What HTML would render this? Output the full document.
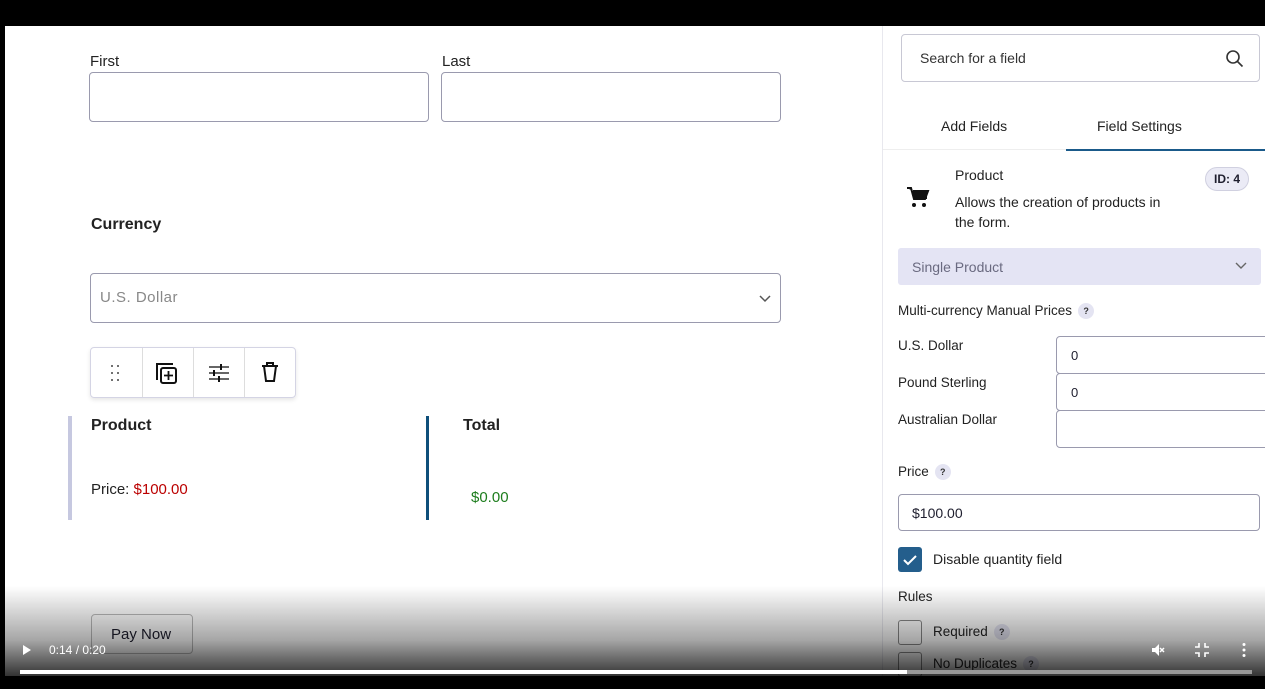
<!DOCTYPE html>
<html><head><style>
*{box-sizing:border-box;margin:0;padding:0}
body{width:1265px;height:689px;overflow:hidden;background:#000;font-family:"Liberation Sans",sans-serif;color:#1e1e2e;position:relative}
.pg{position:absolute;left:5px;top:26px;width:1260px;height:650px;background:#fff;overflow:hidden}
.a{position:absolute}
.inp{position:absolute;border:1px solid #9a9aae;border-radius:4px;background:#fff}
.lbl{position:absolute;font-size:14px;color:#222}
.q{display:inline-block;width:16px;height:16px;border-radius:8px;background:#e4e4f2;font-size:9px;text-align:center;line-height:16px;font-weight:bold;color:#333;vertical-align:middle;margin-left:6px}
</style></head><body>
<div class="pg">
<div class="lbl" style="left:85px;top:27px;font-size:15px">First</div>
<div class="lbl" style="left:437px;top:27px;font-size:15px">Last</div>
<div class="inp" style="left:84px;top:46px;width:340px;height:50px"></div>
<div class="inp" style="left:436px;top:46px;width:340px;height:50px"></div>
<div class="lbl" style="left:86px;top:190px;font-size:16px;font-weight:bold">Currency</div>
<div class="inp" style="left:85px;top:247px;width:691px;height:50px;font-size:15px;color:#888;padding:15px 9px;letter-spacing:.5px">U.S. Dollar
<svg class="a" style="right:8px;top:19px" width="14" height="10"><path d="M2 3l5 5 5-5" stroke="#555" stroke-width="1.5" fill="none"/></svg></div>
<div class="a" style="left:85px;top:321px;width:206px;height:51px;border:1px solid #d4d4e4;border-radius:4px;box-shadow:0 2px 4px rgba(0,0,0,.1);display:flex">
<div style="width:52px;border-right:1px solid #ddd;position:relative"><svg class="a" style="left:19px;top:16px" width="10" height="20"><g fill="#444"><circle cx="2" cy="2" r="1"/><circle cx="8" cy="2" r="1"/><circle cx="2" cy="9" r="1"/><circle cx="8" cy="9" r="1"/><circle cx="2" cy="16" r="1"/><circle cx="8" cy="16" r="1"/></g></svg></div>
<div style="width:51px;border-right:1px solid #ddd;position:relative"><svg class="a" style="left:12px;top:12px" width="26" height="26"><path d="M2 20V4h16" stroke="#111" stroke-width="2" fill="none"/><rect x="6" y="8" width="15" height="15" rx="2" stroke="#111" stroke-width="2" fill="none"/><path d="M13.5 11v9M9 15.5h9" stroke="#111" stroke-width="1.8"/></svg></div>
<div style="width:51px;border-right:1px solid #ddd;position:relative"><svg class="a" style="left:14px;top:15px" width="22" height="20"><path d="M1 4h20M1 10h20M1 16h20" stroke="#333" stroke-width="1.5"/><path d="M13 1v6M6 7v6M11 13v6" stroke="#111" stroke-width="2"/></svg></div>
<div style="flex:1;position:relative"><svg class="a" style="left:15px;top:13px" width="20" height="22"><path d="M2 5h16M7 5V2h6v3M4 5l2 15h8l2-15" stroke="#111" stroke-width="2" fill="none"/></svg></div>
</div>
<div class="a" style="left:63px;top:390px;width:4px;height:104px;background:#c6c8e0"></div>
<div class="a" style="left:421px;top:390px;width:3px;height:104px;background:#0e4f7a"></div>
<div class="lbl" style="left:86px;top:391px;font-size:16px;font-weight:bold">Product</div>
<div class="lbl" style="left:458px;top:391px;font-size:16px;font-weight:bold">Total</div>
<div class="lbl" style="left:86px;top:455px;font-size:15px">Price: <span style="color:#b00">$100.00</span></div>
<div class="lbl" style="left:466px;top:463px;font-size:15px;color:#1d7d1d">$0.00</div>
<div class="a" style="left:86px;top:588px;width:102px;height:40px;border:1px solid #bbb;border-radius:4px;font-size:15px;padding:11px 19px">Pay Now</div>

<div class="a" style="left:877px;top:0;width:1px;height:650px;background:#e8e8ee"></div>
<div class="inp" style="left:896px;top:8px;width:359px;height:48px;border-color:#c8c8d4;font-size:14px;color:#333;padding:15px 18px">Search for a field
<svg class="a" style="right:14px;top:14px" width="20" height="20"><circle cx="8" cy="8" r="6" stroke="#333" stroke-width="1.6" fill="none"/><path d="M12.5 12.5l5 5" stroke="#333" stroke-width="1.6"/></svg></div>
<div class="lbl" style="left:936px;top:92px">Add Fields</div>
<div class="lbl" style="left:1092px;top:92px">Field Settings</div>
<div class="a" style="left:878px;top:123px;width:183px;height:1px;background:#eee"></div>
<div class="a" style="left:1061px;top:123px;width:199px;height:2px;background:#1a5a8a"></div>
<svg class="a" style="left:901px;top:160px" width="24" height="22"><path d="M1 2h4l3 11h11l3-8H7" fill="#111" stroke="#111" stroke-width="2"/><rect x="7" y="5" width="14" height="8" fill="#111"/><circle cx="8" cy="19" r="2" fill="#111"/><circle cx="18" cy="19" r="2" fill="#111"/></svg>
<div class="lbl" style="left:950px;top:141px">Product</div>
<div class="lbl" style="left:950px;top:166px;line-height:20px;width:222px">Allows the creation of products in the form.</div>
<div class="a" style="left:1200px;top:141px;width:44px;height:24px;border-radius:12px;background:#ebebf6;border:1px solid #d0d0e0;font-size:12px;font-weight:bold;text-align:center;line-height:22px">ID: 4</div>
<div class="a" style="left:893px;top:222px;width:363px;height:37px;background:#e4e4f4;border-radius:3px;font-size:14px;color:#6a6a80;padding:11px 14px">Single Product
<svg class="a" style="right:14px;top:14px" width="12" height="8"><path d="M1 1l5 5 5-5" stroke="#666" stroke-width="1.4" fill="none"/></svg></div>
<div class="lbl" style="left:893px;top:277px;font-size:13.5px">Multi-currency Manual Prices<span class="q">?</span></div>
<div class="lbl" style="left:893px;top:312px;font-size:13.5px">U.S. Dollar</div>
<div class="lbl" style="left:893px;top:349px;font-size:13.5px">Pound Sterling</div>
<div class="lbl" style="left:893px;top:386px;font-size:13.5px">Australian Dollar</div>
<div class="inp" style="left:1051px;top:310px;width:220px;height:38px;font-size:13px;padding:11px 14px">0</div>
<div class="inp" style="left:1051px;top:347px;width:220px;height:38px;font-size:13px;padding:11px 14px">0</div>
<div class="inp" style="left:1051px;top:384px;width:220px;height:38px"></div>
<div class="lbl" style="left:893px;top:438px;font-size:13.5px">Price<span class="q">?</span></div>
<div class="inp" style="left:893px;top:468px;width:362px;height:37px;font-size:14px;padding:10px 13px">$100.00</div>
<div class="a" style="left:893px;top:521px;width:24px;height:25px;background:#245e8c;border-radius:3px"><svg width="24" height="25"><path d="M6 13l4 4 8-8" stroke="#fff" stroke-width="2" fill="none"/></svg></div>
<div class="lbl" style="left:928px;top:525px">Disable quantity field</div>
<div class="lbl" style="left:893px;top:563px;font-size:13.5px">Rules</div>
<div class="a" style="left:893px;top:594px;width:24px;height:25px;border:1px solid #888;border-radius:3px"></div>
<div class="lbl" style="left:928px;top:598px;font-size:13.5px">Required<span class="q">?</span></div>
<div class="a" style="left:893px;top:626px;width:24px;height:25px;border:1px solid #888;border-radius:3px"></div>
<div class="lbl" style="left:928px;top:630px;font-size:13.5px">No Duplicates<span class="q">?</span></div>
<div class="a" style="left:0;top:560px;width:1260px;height:90px;background:linear-gradient(rgba(0,0,0,0),rgba(0,0,0,.35) 60%,rgba(0,0,0,.8))"></div>
</div>
<div class="a" style="left:0;top:640px;width:1265px;height:20px;color:#fff;font-size:12px">
<svg class="a" style="left:22px;top:4px" width="10" height="12"><path d="M1 1l8 5-8 5z" fill="#fff"/></svg>
<span class="a" style="left:49px;top:3px">0:14 / 0:20</span>
<svg class="a" style="left:1150px;top:2px" width="16" height="16"><path d="M2 6h3l4-4v12l-4-4H2z" fill="#fff"/><path d="M10 6l4 4M14 6l-4 4" stroke="#fff" stroke-width="1.5"/></svg>
<svg class="a" style="left:1194px;top:2px" width="16" height="16"><path d="M5 1v4H1M11 1v4h4M5 15v-4H1M11 15v-4h4" stroke="#fff" stroke-width="1.6" fill="none"/></svg>
<svg class="a" style="left:1241px;top:2px" width="6" height="16"><circle cx="3" cy="2.5" r="1.5" fill="#fff"/><circle cx="3" cy="8" r="1.5" fill="#fff"/><circle cx="3" cy="13.5" r="1.5" fill="#fff"/></svg>
</div>
<div class="a" style="left:20px;top:670px;width:1232px;height:4px;background:#999"></div>
<div class="a" style="left:20px;top:670px;width:887px;height:4px;background:#fff"></div>
</body></html>
